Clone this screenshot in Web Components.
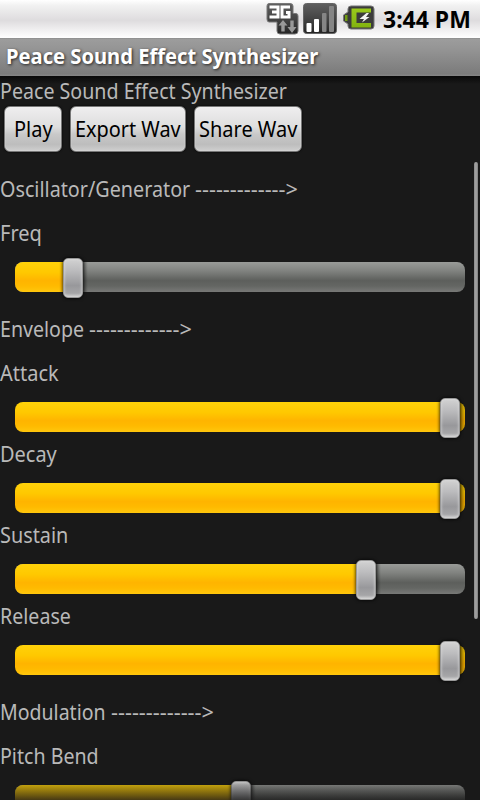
<!DOCTYPE html>
<html lang="en"><head><meta charset="utf-8"><title>Peace Sound Effect Synthesizer</title>
<style>html,body{margin:0;background:#191919;overflow:hidden}</style></head>
<body><synth-app></synth-app>
<script>
const define = (name, html, after) => customElements.define(name, class extends HTMLElement {
  connectedCallback() {
    const t = document.createElement('template');
    t.innerHTML = typeof html === 'function' ? html(this) : html;
    this.attachShadow({mode:'open'}).append(t.content.cloneNode(true));
    if (after) after(this);
  }
});

// Single line of text, condensed to the width given in the "w" attribute.
define('fit-text', `<style>:host{display:block;white-space:nowrap;line-height:28px;height:28px}
span{display:inline-block;transform-origin:0 50%}</style><span></span>`, el => {
  const s = el.shadowRoot.querySelector('span');
  s.textContent = el.getAttribute('text');
  s.style.transform = `scaleX(${+el.getAttribute('w') / s.offsetWidth})`;
  el.style.width = el.getAttribute('w') + 'px';
});

define('status-bar', `<style>
:host{display:flex;justify-content:flex-end;align-items:center;height:38px;box-sizing:border-box;padding-right:9px;background:linear-gradient(#fff,#f1f1f1 15%,#dedcde 54%,#f0eff0 78%,#fff);color:#000;font-weight:700;font-size:23.5px}
svg{margin-right:7px}</style>
<svg width="112" height="38" viewBox="0 0 112 38">
<defs><linearGradient id="d" x2="0" y2="1"><stop stop-color="#606060"/><stop offset=".5" stop-color="#444"/><stop offset="1" stop-color="#242424"/></linearGradient>
<linearGradient id="g" x2="0" y2="1"><stop stop-color="#9aca1c"/><stop offset="1" stop-color="#82b30f"/></linearGradient></defs>
<path d="M5 3.500H26Q29 3.500 29 6V13.500H32Q34 13.500 34 16V31Q34 34 31 34H16Q13 34 13 31V22H5Q3 22 3 19V6Q3 3.500 5 3.500Z" fill="url(#d)" stroke="#777" stroke-width="1"/>
<path d="M5.500 7H14V17H5.500M8 12H14M26 7H18V17H25V12.500H22" fill="none" stroke="#fff" stroke-width="3"/>
<path d="M19 20L23.5 25.5H20.7V31.500H17.3V25.5H14.5ZM26.3 20.500H29.7V27H32.5L28 33L23.5 27H26.3Z" fill="#999"/>
<rect x="39.500" y="3.500" width="33" height="30" rx="3" fill="url(#d)" stroke="#666"/>
<rect x="42.500" y="23" width="5" height="9" rx="1" fill="#fff"/><rect x="50" y="19" width="5" height="13" rx="1" fill="#fff"/><rect x="58" y="13" width="4.500" height="19" rx="1" fill="#858585"/><rect x="65" y="6" width="5" height="26" rx="1" fill="#858585"/>
<path d="M87 6H107Q110 6 110 9V26Q110 29 107 29H87Q84 29 84 26V24L79.500 21V15L84 12V9Q84 6 87 6Z" fill="#3b3b3b" stroke="#777"/>
<path d="M87.500 8.500H107V12.500H92.500V23H107V27.500H87.500Z" fill="url(#g)"/><rect x="81" y="15" width="2.500" height="6" fill="#719b12"/>
<path d="M102.500 13L95.500 19H100L98 22.500L105.500 17H102L105 13Z" fill="#f2f2f2"/></svg>
<fit-text w="88" text="3:44 PM"></fit-text>`);

define('title-bar', `<style>:host{display:flex;align-items:center;height:38px;box-sizing:border-box;padding:0 6px 3px;background:linear-gradient(#8c8c8c,#9c9c9c 4%,#969696 25%,#7b7b7b 94%,#858585);color:#fff;font-size:21px;font-weight:700;text-shadow:1px 1px 3px #222}</style><slot></slot>`);

define('push-button', e => `<style>:host{display:flex;box-sizing:border-box;height:46px;justify-content:center;align-items:center;width:${e.getAttribute('width')}px;border:1px solid #777;border-radius:6px;background:linear-gradient(#efeeef,#dedede 45%,#c9c9c9 62%,#bdbdbd 85%,#cfcfcf);box-shadow:0 0 2px #000,inset 0 0 1px #fff;color:#000;font-size:21px}</style><slot></slot>`);

define('section-head', e => `<style>:host{display:flex;justify-content:flex-start;gap:5px;box-sizing:border-box;height:59px;padding-top:12px}</style><fit-text w="${e.getAttribute('w')}" text="${e.getAttribute('text')}"></fit-text><fit-text w="103" text="-------------&gt;"></fit-text>`);

// Labelled seek bar; "pos" is the centre of the thumb along the 480px row.
define('seek-bar', e => `<style>
:host{display:block;height:81px}
::slotted(*){margin:-3px 0 3px}
:host{display:flow-root;box-sizing:border-box}
.row{display:grid;grid-template:53px/15px ${e.getAttribute('pos')-15}px 1fr 15px}
.track{grid-area:1/2/2/4;height:30px;margin-top:12px;border-radius:8px;background:linear-gradient(#999b98,#80827f 30%,#5d5f5c 62%,#646663 80%,#787977);overflow:hidden}
.fill{height:30px;width:${e.getAttribute('pos')-15}px;background:linear-gradient(#ffd20a,#ffc800 35%,#ffb400 62%,#ffba00 80%,#ffc70c)}
.full .fill{width:100%}
.shade{grid-area:1/3;justify-self:start;margin:12px 0 0 9px;width:6px;height:30px;background:linear-gradient(90deg,#0006,#0000)}
.full .shade{border-radius:0 8px 8px 0;background:linear-gradient(90deg,#0006,#0002)}
.thumb{grid-area:1/3;justify-self:start;box-sizing:border-box;width:20px;height:40px;margin:8px 0 0 -10px;border:1px solid #999;border-radius:5px;background:linear-gradient(#d2d2d2,#bcbcbe 30%,#98989b 70%,#a6a6a8 90%,#d0d0d0);box-shadow:0 0 3px 1px #0009,inset 0 0 3px #ddd}
</style><slot></slot><div class="row ${e.hasAttribute('full')?'full':''}"><div class="track"><div class="fill"></div></div><div class="shade"></div><div class="thumb"></div></div>`);

define('synth-app', `<style>
:host{display:flex;flex-direction:column;width:480px;height:800px;overflow:hidden;position:relative;background:#191919;color:#b9b9b9;font-family:"Noto Sans","Open Sans",sans-serif;font-size:21px}
.intro{height:31px;box-sizing:border-box;padding-top:1px;background:linear-gradient(#080808,#191919 8px);flex:none}
.buttons{display:flex;gap:8px;padding-left:4px;height:56px;box-sizing:border-box;flex:none;margin-top:-1px}
status-bar,title-bar{flex:none}
main{height:638px;margin-top:1px;flex:none}
.bar{position:absolute;right:2px;top:162px;width:4px;height:457px;border-radius:2px;background:linear-gradient(90deg,#888,#a5a5a5,#7d7d7d)}
.fade{position:absolute;left:0;right:0;bottom:0;height:20px;background:linear-gradient(#19191900,#19191944 25%,#191919cc)}
</style>
<status-bar></status-bar>
<title-bar><fit-text w="312" text="Peace Sound Effect Synthesizer"></fit-text></title-bar>
<div class="intro"><fit-text w="287" text="Peace Sound Effect Synthesizer"></fit-text></div>
<div class="buttons"><push-button width="58"><fit-text w="39" text="Play"></fit-text></push-button><push-button width="116"><fit-text w="106" text="Export Wav"></fit-text></push-button><push-button width="108"><fit-text w="98" text="Share Wav"></fit-text></push-button></div>
<main>
<section-head w="190" text="Oscillator/Generator"></section-head>
<seek-bar pos="73"><fit-text w="42" text="Freq"></fit-text></seek-bar>
<section-head w="84" text="Envelope"></section-head>
<seek-bar pos="450" full><fit-text w="59" text="Attack"></fit-text></seek-bar>
<seek-bar pos="450" full><fit-text w="57" text="Decay"></fit-text></seek-bar>
<seek-bar pos="366"><fit-text w="68" text="Sustain"></fit-text></seek-bar>
<seek-bar pos="450" full><fit-text w="71" text="Release"></fit-text></seek-bar>
<section-head w="106" text="Modulation"></section-head>
<seek-bar pos="241"><fit-text w="99" text="Pitch Bend"></fit-text></seek-bar>
</main><div class="bar"></div><div class="fade"></div>`);
</script></body></html>
